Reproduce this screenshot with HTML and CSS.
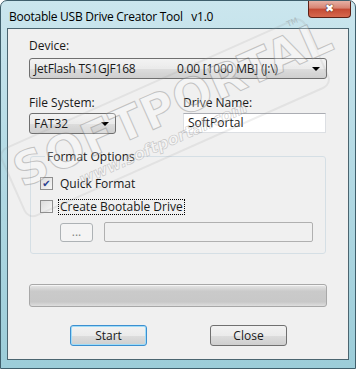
FILE: index.html
```html
<!DOCTYPE html>
<html>
  <head>
    <title>Bootable USB Drive Creator Tool</title>
    <meta charset="UTF-8" />
    <link rel="stylesheet" href="styles.css">
  </head>
  <body>
    <div class="window">
      <div class="titlebar">
        <div class="title">Bootable USB Drive Creator Tool   v1.0</div>
        <div class="close-x">&#10006;</div>
      </div>
      <div class="client">
        <div class="label">Device:</div>
        <div class="combo wide">
          <span class="dev-name">JetFlash TS1GJF168</span>
          <span class="dev-size">0.00 [1000 MB] (J:\)</span>
          <span class="arrow"></span>
        </div>

        <div class="fields">
          <div>
            <div class="label">File System:</div>
            <div class="combo small">
              <span>FAT32</span>
              <span class="arrow"></span>
            </div>
          </div>
          <div>
            <div class="label">Drive Name:</div>
            <div class="textbox">SoftPortal</div>
          </div>
        </div>

        <fieldset class="group">
          <legend>Format Options</legend>
          <div class="check-row">
            <span class="checkbox checked">&#10004;</span>
            <span class="check-label">Quick Format</span>
          </div>
          <div class="check-row">
            <span class="checkbox"></span>
            <span class="check-label focus">Create Bootable Drive</span>
          </div>
          <div class="browse-row">
            <div class="btn-disabled">...</div>
            <div class="path-disabled"></div>
          </div>
        </fieldset>

        <div class="progress"></div>

        <div class="buttons">
          <div class="btn default">Start</div>
          <div class="btn">Close</div>
        </div>
      </div>
      <div class="watermark">
        <div class="wm-big">SOFTPORTAL</div>
        <div class="wm-url">www.softportal.com</div>
        <div class="wm-tm">TM</div>
      </div>
    </div>
  </body>
</html>
```

FILE: styles.css
```css
body {
  margin: 0;
  padding: 0;
  width: 356px;
  height: 369px;
  overflow: hidden;
  font-family: "Open Sans", "Noto Sans", sans-serif;
  font-size: 12px;
  color: #1a1a1a;
  background: #ffffff;
}

.window {
  position: relative;
  width: 354px;
  height: 367px;
  border: 1px solid #3f5f6c;
  border-radius: 7px 7px 0 0;
  background: linear-gradient(180deg, #cbe6ee 0%, #b6dbe5 40%, #9ccdd9 100%);
  overflow: hidden;
}

.titlebar {
  display: flex;
  align-items: flex-start;
  height: 27px;
}

.title {
  white-space: pre;
  padding: 8px 0 0 8px;
  font-size: 12px;
  line-height: 15px;
  color: #000000;
  letter-spacing: -0.25px;
}

.close-x {
  margin-left: auto;
  margin-right: 4px;
  width: 43px;
  height: 17px;
  border: 1px solid #5c2218;
  border-top: none;
  border-radius: 0 0 4px 4px;
  background: linear-gradient(180deg, #e6b0a4 0%, #d78372 45%, #c44a33 50%, #d6694f 100%);
  color: #ffffff;
  text-align: center;
  font-family: "DejaVu Sans", sans-serif;
  font-size: 11px;
  line-height: 16px;
  text-shadow: 0 0 1px #3a1008, 0 0 1px #3a1008;
  box-sizing: border-box;
}

.client {
  margin: 0 6px;
  height: 332px;
  border: 1px solid #4b6570;
  background: #f0f0f0;
  padding: 9px 21px 0 21px;
  box-sizing: border-box;
}

.label {
  line-height: 15px;
  margin-bottom: 5px;
}

.combo {
  display: flex;
  align-items: center;
  height: 21px;
  border: 1px solid #707070;
  border-radius: 3px;
  background: linear-gradient(180deg, #f3f3f3 0%, #ebebeb 50%, #dddddd 51%, #cfcfcf 100%);
  padding-left: 4px;
  box-sizing: border-box;
  line-height: 15px;
  white-space: nowrap;
}

.wide {
  width: 298px;
}

.dev-name {
  flex: 0 0 143px;
  letter-spacing: -0.2px;
}

.dev-size {
  letter-spacing: -0.2px;
}

.small {
  width: 87px;
}

.arrow {
  margin-left: auto;
  margin-right: 6px;
  width: 0;
  height: 0;
  border-left: 4px solid transparent;
  border-right: 4px solid transparent;
  border-top: 4px solid #000000;
}

.fields {
  display: grid;
  grid-template-columns: 154px 1fr;
  margin-top: 16px;
}

.fields .label {
  margin-bottom: 3px;
}

.textbox {
  width: 143px;
  height: 20px;
  margin-top: 1px;
  border: 1px solid #dcdfe3;
  border-top-color: #abadb3;
  background: #ffffff;
  padding-left: 4px;
  line-height: 18px;
  box-sizing: border-box;
}

.group {
  margin: 15px 0 0 1px;
  padding: 12px 0 0 9px;
  width: 296px;
  height: 105px;
  border: 1px solid #d5dfe5;
  border-radius: 3px;
  box-sizing: border-box;
}

.group legend {
  margin-left: 5px;
  padding: 0 2px;
  line-height: 15px;
}

.check-row {
  display: flex;
  align-items: center;
  height: 15px;
  margin-bottom: 8px;
}

.checkbox {
  width: 13px;
  height: 13px;
  border: 1px solid #8f8f8f;
  background: linear-gradient(135deg, #dcdcdc, #f7f7f7);
  box-sizing: border-box;
  font-size: 10px;
  line-height: 11px;
  text-align: center;
  color: #2a3f8f;
  font-family: "DejaVu Sans", sans-serif;
}

.check-label {
  margin-left: 6px;
  padding: 0 1px;
  line-height: 14px;
}

.focus {
  outline: 1px dotted #000000;
}

.browse-row {
  display: flex;
  align-items: center;
  margin-top: 6px;
  margin-left: 20px;
}

.btn-disabled {
  width: 33px;
  height: 19px;
  border: 1px solid #adb2b5;
  border-radius: 3px;
  background: #f4f4f4;
  color: #838383;
  text-align: center;
  line-height: 16px;
  box-sizing: border-box;
}

.path-disabled {
  margin-left: 11px;
  width: 209px;
  height: 20px;
  border: 1px solid #b0b0b0;
  border-radius: 2px;
  background: #f0f0f0;
  box-sizing: border-box;
}

.progress {
  margin-top: 30px;
  width: 298px;
  height: 23px;
  border: 1px solid #a8a8a8;
  border-radius: 3px;
  background: linear-gradient(180deg, #e6e6e6 0%, #cacaca 30%, #c8c8c8 80%, #dedede 100%);
  box-sizing: border-box;
  box-shadow: inset 0 1px 0 #f4f4f4;
}

.buttons {
  display: flex;
  gap: 63px;
  margin: 18px 0 0 41px;
}

.btn {
  width: 77px;
  height: 21px;
  border: 1px solid #707070;
  border-radius: 3px;
  background: linear-gradient(180deg, #f2f2f2 0%, #ebebeb 50%, #dddddd 51%, #cfcfcf 100%);
  text-align: center;
  line-height: 19px;
  box-sizing: border-box;
}

.default {
  border-color: #3c8fd0;
  box-shadow: inset 0 0 0 1px #9fdcf8;
}

.watermark {
  position: absolute;
  left: 0;
  top: 0;
  width: 318px;
  padding: 2px 6px 4px 6px;
  border: 2px solid rgba(150, 150, 150, 0.35);
  border-radius: 10px;
  transform-origin: left top;
  transform: translate(-4px, 150px) rotate(-24deg);
  pointer-events: none;
  opacity: 0.45;
}

.wm-big {
  font-family: "DejaVu Sans", sans-serif;
  font-weight: bold;
  font-size: 46px;
  line-height: 48px;
  color: rgba(255, 255, 255, 0.6);
  -webkit-text-stroke: 1px #8a8a8a;
  letter-spacing: 1px;
}

.wm-url {
  margin-left: 56px;
  font-family: "DejaVu Sans", sans-serif;
  font-weight: bold;
  font-style: italic;
  font-size: 16px;
  line-height: 18px;
  color: rgba(255, 255, 255, 0.6);
  -webkit-text-stroke: 0.6px #8a8a8a;
}

.wm-tm {
  position: absolute;
  right: 4px;
  top: -4px;
  font-family: "DejaVu Sans", sans-serif;
  font-size: 8px;
  color: #8a8a8a;
}
```
